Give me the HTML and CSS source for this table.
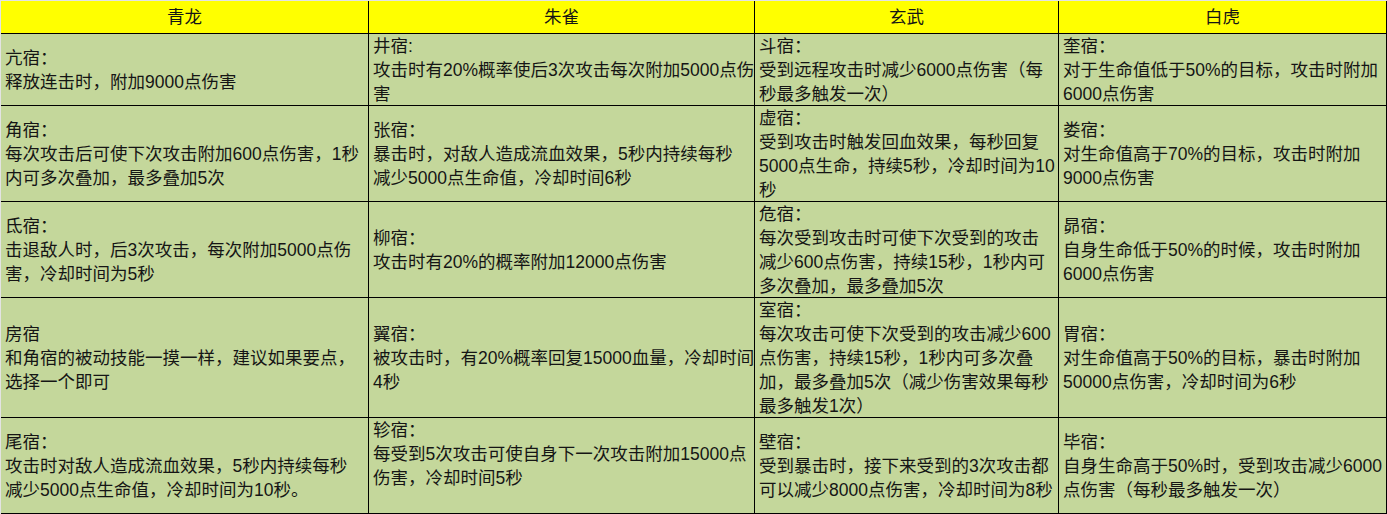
FILE: index.html
```html
<!DOCTYPE html>
<html lang="zh-CN">
<head>
<meta charset="utf-8">
<title>四象星宿</title>
<link rel="stylesheet" href="styles.css">
</head>
<body>
<div class="frame">
  <div class="sheet">
    <div class="cell head">青龙</div>
    <div class="cell head">朱雀</div>
    <div class="cell head">玄武</div>
    <div class="cell head">白虎</div>

    <div class="cell">亢宿：<br>释放连击时，附加9000点伤害</div>
    <div class="cell">井宿:<br>攻击时有20%概率使后3次攻击每次附加5000点伤<br>害</div>
    <div class="cell">斗宿：<br>受到远程攻击时减少6000点伤害（每<br>秒最多触发一次）</div>
    <div class="cell">奎宿：<br>对于生命值低于50%的目标，攻击时附加<br>6000点伤害</div>

    <div class="cell">角宿：<br>每次攻击后可使下次攻击附加600点伤害，1秒<br>内可多次叠加，最多叠加5次</div>
    <div class="cell">张宿：<br>暴击时，对敌人造成流血效果，5秒内持续每秒<br>减少5000点生命值，冷却时间6秒</div>
    <div class="cell">虚宿：<br>受到攻击时触发回血效果，每秒回复<br>5000点生命，持续5秒，冷却时间为10<br>秒</div>
    <div class="cell">娄宿：<br>对生命值高于70%的目标，攻击时附加<br>9000点伤害</div>

    <div class="cell">氐宿：<br>击退敌人时，后3次攻击，每次附加5000点伤<br>害，冷却时间为5秒</div>
    <div class="cell">柳宿：<br>攻击时有20%的概率附加12000点伤害</div>
    <div class="cell">危宿：<br>每次受到攻击时可使下次受到的攻击<br>减少600点伤害，持续15秒，1秒内可<br>多次叠加，最多叠加5次</div>
    <div class="cell">昴宿：<br>自身生命低于50%的时候，攻击时附加<br>6000点伤害</div>

    <div class="cell">房宿<br>和角宿的被动技能一摸一样，建议如果要点，<br>选择一个即可</div>
    <div class="cell">翼宿：<br>被攻击时，有20%概率回复15000血量，冷却时间<br>4秒</div>
    <div class="cell">室宿：<br>每次攻击可使下次受到的攻击减少600<br>点伤害，持续15秒，1秒内可多次叠<br>加，最多叠加5次（减少伤害效果每秒<br>最多触发1次）</div>
    <div class="cell">胃宿：<br>对生命值高于50%的目标，暴击时附加<br>50000点伤害，冷却时间为6秒</div>

    <div class="cell">尾宿：<br>攻击时对敌人造成流血效果，5秒内持续每秒<br>减少5000点生命值，冷却时间为10秒。</div>
    <div class="cell top">轸宿：<br>每受到5次攻击可使自身下一次攻击附加15000点<br>伤害，冷却时间5秒</div>
    <div class="cell">壁宿：<br>受到暴击时，接下来受到的3次攻击都<br>可以减少8000点伤害，冷却时间为8秒</div>
    <div class="cell">毕宿：<br>自身生命高于50%时，受到攻击减少6000<br>点伤害（每秒最多触发一次）</div>
  </div>
</div>
</body>
</html>
```

FILE: styles.css
```css
html, body {
  margin: 0;
  padding: 0;
  background: #e3e3e3;
}

.frame {
  padding: 1px 0 0 1px;
  width: 1387px;
  height: 514px;
  box-sizing: border-box;
  overflow: hidden;
  background: #e3e3e3;
}

.sheet {
  display: grid;
  grid-template-columns: 368px 386px 304px 328px;
  grid-template-rows: 33px 72px 96px 96px 120px 96px;
  font-family: "Liberation Sans", "Noto Sans CJK SC", sans-serif;
  font-size: 17.5px;
  line-height: 24px;
  color: #151515;
}

.cell {
  box-sizing: border-box;
  border-right: 1px solid #000;
  border-bottom: 1px solid #000;
  background: #c4d79b;
  padding: 0 4px;
  display: flex;
  flex-direction: column;
  justify-content: center;
  white-space: nowrap;
  overflow: visible;
}

.cell.top {
  justify-content: flex-start;
}

.cell.head {
  background: #ffff00;
  align-items: center;
  text-align: center;
}
```
